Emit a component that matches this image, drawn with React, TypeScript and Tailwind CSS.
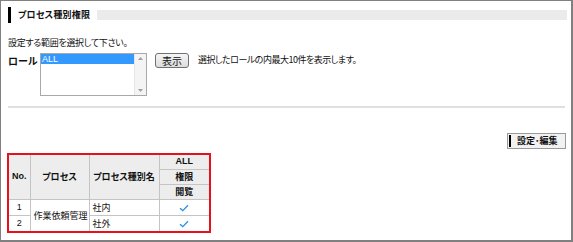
import React from "react";

const font = {
  fontFamily: '"Noto Sans CJK JP", "Noto Sans", sans-serif',
};

function Check() {
  return (
    <svg width="10" height="8" viewBox="0 0 10 8" className="inline-block">
      <path d="M1 4.2 L3.8 6.6 L9 1.2" fill="none" stroke="#2b8fe0" strokeWidth="1.3" />
    </svg>
  );
}

const lat = { fontFamily: '"Liberation Sans", sans-serif', fontSize: "9px" };

export default function App() {
  return (
    <div
      className="w-[573px] h-[242px] bg-white border-t border-l border-r-2 border-b-2 border-[#808080] text-[#111] [font-feature-settings:'palt'] overflow-hidden"
      style={font}
    >
      <div className="pl-[7px] pr-[4px] pt-[6px]">
        {/* title */}
        <div className="flex items-start h-[16px]">
          <div className="w-[3px] h-[16px] bg-black" />
          <div className="ml-[7px] text-[9px] leading-[16px] font-bold tracking-[0.2px]">プロセス種別権限</div>
          <div className="ml-[7px] mt-[3px] flex-1 h-[10px] bg-[#ebebeb]" />
        </div>

        <div className="mt-[14px] text-[9px] leading-[12px] tracking-[-0.3px]">設定する範囲を選択して下さい。</div>

        <div className="mt-[4px] flex items-start">
          <div className="w-[32px] text-[10px] leading-[12px] font-bold mt-[2px]">ロール</div>
          <div className="w-[107px] h-[43px] border border-[#a8a8a8] flex bg-white">
            <div className="flex-1">
              <div className="h-[10px] bg-[#3399ff] text-white text-[9px] leading-[10px] pl-[1px]" style={{ fontFamily: '"Liberation Sans", sans-serif' }}>ALL</div>
            </div>
            <div className="w-[12px] bg-[#f4f4f4] border-l border-[#e6e6e6] flex flex-col justify-between items-center py-[3px]">
              <svg width="5" height="3" viewBox="0 0 5 3"><path d="M0 3 L2.5 0 L5 3 Z" fill="#a0a0a0" /></svg>
              <svg width="5" height="3" viewBox="0 0 5 3"><path d="M0 0 L2.5 3 L5 0 Z" fill="#a0a0a0" /></svg>
            </div>
          </div>
          <div className="ml-[8px] w-[34px] h-[15px] border border-[#707070] rounded-[3px] bg-gradient-to-b from-[#f6f6f6] to-[#dcdcdc] text-[10px] leading-[13px] text-center">表示</div>
          <div className="ml-[9px] text-[9px] leading-[12px] mt-[1px] tracking-[-0.5px]">選択したロールの内最大10件を表示します。</div>
        </div>

        <div className="mt-[10px] h-[2px] bg-[#e0e0e0] mr-[2px]" />

        <div className="mt-[25px] flex justify-end mr-[1px]">
          <div className="h-[16px] w-[59px] border border-[#9a9a9a] bg-[#f2f2f2] flex items-center">
            <div className="w-[2px] h-[12px] bg-black ml-[1px]" />
            <div className="ml-[6px] text-[9px] leading-[14px] font-bold">設定･編集</div>
          </div>
        </div>

        <div className="mt-[4px] ml-[-1px] w-[204px] border-2 border-[#e8101a]">
          <table className="w-[200px] border-collapse border-hidden text-[9px] leading-[13px] table-fixed">
            <colgroup>
              <col className="w-[21px]" />
              <col className="w-[59px]" />
              <col className="w-[70px]" />
              <col className="w-[50px]" />
            </colgroup>
            <tbody>
              <tr className="h-[14px]">
                <td rowSpan={3} className="border border-[#c4c4c4] bg-[#ededed] font-bold text-center p-0" style={lat}>No.</td>
                <td rowSpan={3} className="border border-[#c4c4c4] bg-[#ededed] font-bold text-center p-0">プロセス</td>
                <td rowSpan={3} className="border border-[#c4c4c4] bg-[#ededed] font-bold text-center p-0">プロセス種別名</td>
                <td className="border border-[#c4c4c4] bg-[#ededed] font-bold text-center p-0" style={lat}>ALL</td>
              </tr>
              <tr className="h-[15px]">
                <td className="border border-[#c4c4c4] bg-[#ededed] font-bold text-center p-0">権限</td>
              </tr>
              <tr className="h-[15px]">
                <td className="border border-[#c4c4c4] bg-[#ededed] font-bold text-center p-0">閲覧</td>
              </tr>
              <tr className="h-[16px]">
                <td className="border border-[#c4c4c4] text-center p-0" style={lat}>1</td>
                <td rowSpan={2} className="border border-[#c4c4c4] pl-[3px] py-0 pr-0 whitespace-nowrap">作業依頼管理</td>
                <td className="border border-[#c4c4c4] pl-[3px] py-0">社内</td>
                <td className="border border-[#c4c4c4] text-center p-0"><Check /></td>
              </tr>
              <tr className="h-[16px]">
                <td className="border border-[#c4c4c4] text-center p-0" style={lat}>2</td>
                <td className="border border-[#c4c4c4] pl-[3px] py-0">社外</td>
                <td className="border border-[#c4c4c4] text-center p-0"><Check /></td>
              </tr>
            </tbody>
          </table>
        </div>
      </div>
    </div>
  );
}
